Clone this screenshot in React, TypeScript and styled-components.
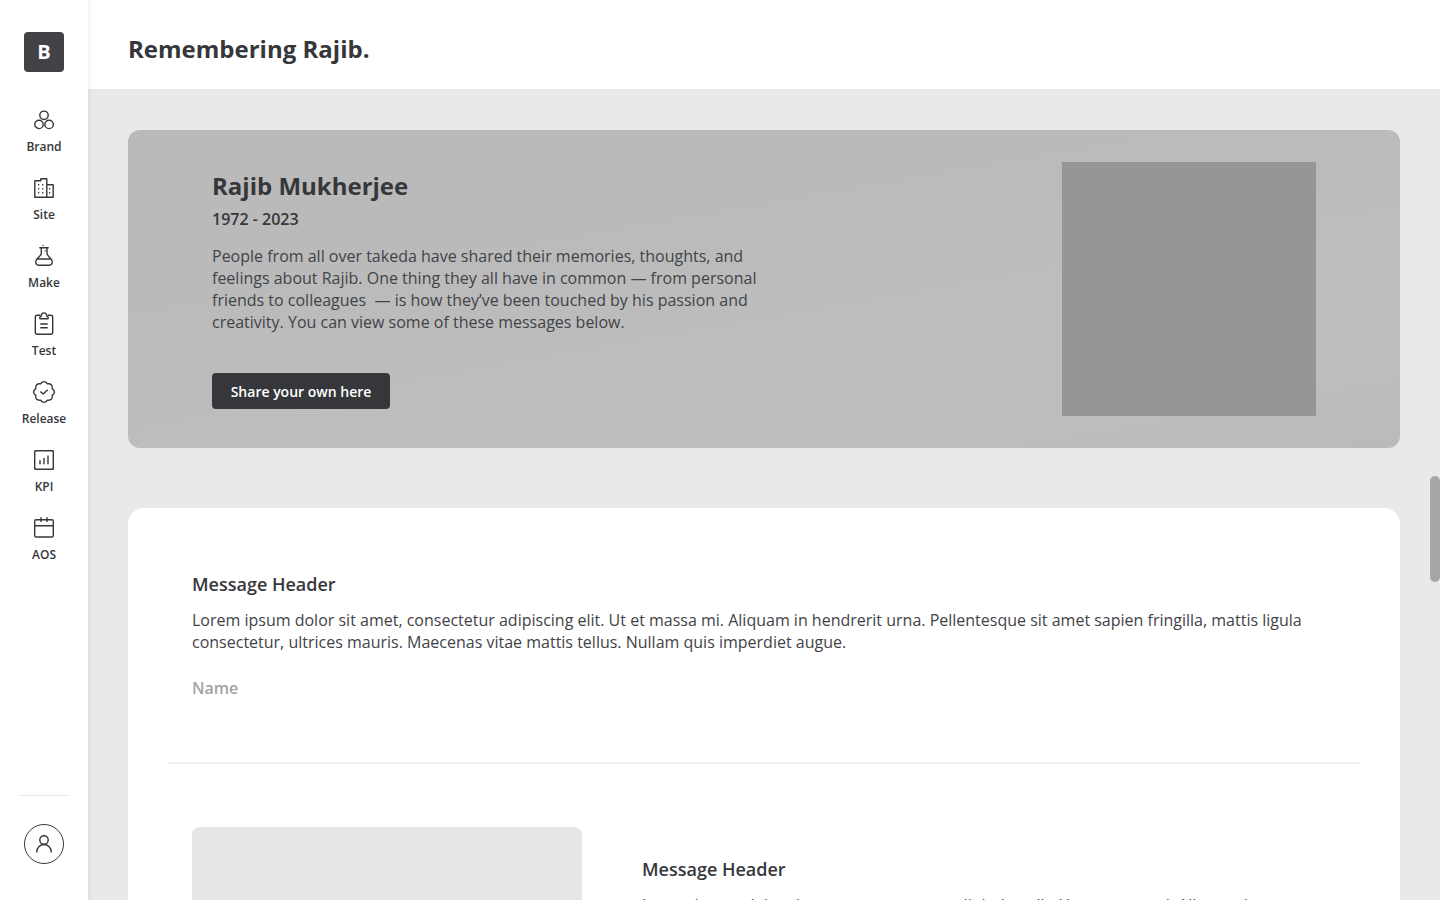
import React from "react";
import styled, { createGlobalStyle } from "styled-components";

const ink = "#36373a";
const copy = "#424347";

const GlobalStyle = createGlobalStyle`
  *, *::before, *::after { box-sizing: border-box; }
  body {
    margin: 0;
    background: #e9e9e9;
    color: ${ink};
    font-family: "Open Sans", "Noto Sans", sans-serif;
    font-size: 16px;
    line-height: 22px;
  }
  h1, h2, h3, p, ul { margin: 0; padding: 0; }
`;

const Shell = styled.div`
  display: flex;
  height: 100vh;
  overflow: hidden;
`;

const Sidebar = styled.aside`
  position: relative;
  z-index: 1;
  display: flex;
  flex-direction: column;
  align-items: center;
  flex: none;
  width: 88px;
  padding: 32px 0 36px;
  background: #fff;
  box-shadow: 0 0 6px rgba(0, 0, 0, 0.1);
`;

const Logo = styled.a`
  display: flex;
  align-items: center;
  justify-content: center;
  width: 40px;
  height: 40px;
  border-radius: 4px;
  background: #434347;
  color: #fff;
  font-size: 20px;
  font-weight: 700;
  text-decoration: none;
`;

const NavList = styled.ul`
  display: flex;
  flex-direction: column;
  gap: 20px;
  margin-top: 36px;
  list-style: none;
`;

const NavLink = styled.a`
  display: flex;
  flex-direction: column;
  align-items: center;
  gap: 6px;
  color: ${ink};
  font-size: 12px;
  font-weight: 600;
  line-height: 18px;
  text-decoration: none;
`;

const Icon = styled.svg`
  width: 24px;
  height: 24px;
  fill: none;
  stroke: currentColor;
  stroke-width: 1.4;
  stroke-linejoin: round;
`;

const Account = styled.div`
  display: flex;
  justify-content: center;
  width: 48px;
  margin-top: auto;
  padding-top: 28px;
  border-top: 1px solid #e6e6e6;
`;

const AccountButton = styled.button`
  display: flex;
  align-items: center;
  justify-content: center;
  width: 40px;
  height: 40px;
  padding: 0;
  border: 1px solid ${ink};
  border-radius: 50%;
  background: #fff;
  color: ${ink};
`;

const Page = styled.div`
  flex: 1;
  min-width: 0;
  height: 100vh;
  overflow: hidden;
`;

const Header = styled.header`
  display: flex;
  align-items: center;
  height: 90px;
  padding: 8px 40px 0;
  border-bottom: 1px solid #e9e9e9;
  background: #fff;
`;

const Title = styled.h1`
  font-size: 24px;
  font-weight: 700;
  line-height: 32px;
`;

const Main = styled.main`
  display: flex;
  flex-direction: column;
  gap: 60px;
  padding: 40px;
`;

const Hero = styled.section`
  display: flex;
  justify-content: space-between;
  gap: 40px;
  padding: 32px 84px;
  border-radius: 12px;
  background: linear-gradient(170deg, #bababa 30%, #bdbdbd 60%, #bdbdbd 85%, #bababa);
`;

const HeroText = styled.div`
  display: flex;
  flex-direction: column;
  align-items: flex-start;
  max-width: 576px;
  padding-top: 8px;
`;

const Person = styled.h2`
  font-size: 24px;
  font-weight: 700;
  line-height: 32px;
`;

const Years = styled.p`
  margin-top: 6px;
  font-weight: 600;
`;

const HeroCopy = styled.p`
  margin-top: 15px;
  color: ${copy};
  white-space: pre-wrap;
`;

const ShareButton = styled.button`
  min-width: 178px;
  height: 36px;
  margin-top: 40px;
  padding: 0 16px;
  border: 0;
  border-radius: 4px;
  background: ${ink};
  color: #fff;
  font-family: inherit;
  font-size: 14px;
  font-weight: 600;
`;

const Portrait = styled.div`
  flex: none;
  width: 254px;
  height: 254px;
  background: #969696;
`;

const Card = styled.section`
  padding: 0 40px;
  border-radius: 16px;
  background: #fff;
`;

const Message = styled.article`
  display: flex;
  gap: 60px;
  padding: 63px 24px;
  & + & { border-top: 2px solid #f2f2f2; }
`;

const Photo = styled.div`
  flex: none;
  width: 390px;
  height: 208px;
  border-radius: 8px;
  background: #e6e6e6;
`;

const MessageBody = styled.div`
  flex: 1;
  align-self: center;
  padding-right: 16px;
`;

const MessageTitle = styled.h3`
  font-size: 18px;
  font-weight: 600;
  line-height: 26px;
`;

const MessageText = styled.p`
  margin-top: 12px;
  color: ${copy};
`;

const Author = styled.p`
  margin-top: 24px;
  color: #a3a3a3;
  font-weight: 600;
`;

const ScrollThumb = styled.div`
  position: fixed;
  right: 0;
  top: 476px;
  z-index: 2;
  width: 10px;
  height: 106px;
  border-radius: 5px;
  background: #a6a6a6;
`;

const lorem =
  "Lorem ipsum dolor sit amet, consectetur adipiscing elit. Ut et massa mi. Aliquam in hendrerit urna. Pellentesque sit amet sapien fringilla, mattis ligula consectetur, ultrices mauris. Maecenas vitae mattis tellus. Nullam quis imperdiet augue.";

const navItems = [
  {
    label: "Brand",
    icon: (
      <>
        <circle cx="12" cy="7.3" r="4.2" />
        <circle cx="7" cy="16.4" r="4.2" />
        <circle cx="17.1" cy="16.4" r="4.2" />
      </>
    ),
  },
  {
    label: "Site",
    icon: (
      <>
        <path d="M2.8 21.2V4.8H8.8V2.8h6v18.4zM14.8 8.7h6.4v12.5h-6.4" />
        <path
          d="M6.7 8v1.4M10.7 8v1.4M6.7 12v1.4M10.7 12v1.4M6.7 16v1.4M10.7 16v1.4M17.6 12v1.4M17.6 16v1.4"
          strokeWidth="1.2"
        />
      </>
    ),
  },
  {
    label: "Make",
    icon: (
      <>
        <path d="M7.3 3.8h9.4M9.3 3.8v5.6c0 1.2-.5 1.7-1.5 2.7l-2.6 2.7c-2.6 2.8-1.4 6.5 1.8 6.5h10c3.2 0 4.4-3.7 1.8-6.5l-2.3-2.7c-1-1-1.5-1.5-1.5-2.7V3.8M4.8 15h14.6" />
        <path d="M11 .8v1.2M13.2 6.3v1.2" strokeWidth="1.2" />
      </>
    ),
  },
  {
    label: "Test",
    icon: (
      <>
        <path d="M8.2 3.2H5.2a2 2 0 0 0-1.9 2v15a2 2 0 0 0 1.9 2h13.6a2 2 0 0 0 1.9-2v-15a2 2 0 0 0-1.9-2h-3" />
        <path d="M8.3 6.8c-.8 0-.8-2.4.9-2.6 0-4.4 5.6-4.4 5.6 0 1.7.2 1.7 2.6.9 2.6zM8.3 12h7.4M8.3 15.8h7.4" />
      </>
    ),
  },
  {
    label: "Release",
    icon: (
      <>
        <path d="M8.6 3.8Q12 -.6 15.4 3.8Q20.9 3.1 20.2 8.6Q24.6 12 20.2 15.4Q20.9 20.9 15.4 20.2Q12 24.6 8.6 20.2Q3.1 20.9 3.8 15.4Q-.6 12 3.8 8.6Q3.1 3.1 8.6 3.8z" />
        <path d="M8.4 11.5l2.7 2.6 4.7-4.3" />
      </>
    ),
  },
  {
    label: "KPI",
    icon: (
      <>
        <rect x="2.7" y="2.7" width="18.6" height="18.6" rx=".6" />
        <path d="M8 12.3v4M12 10v6.3M16 7.4v8.9" />
      </>
    ),
  },
  {
    label: "AOS",
    icon: (
      <>
        <rect x="2.7" y="3.7" width="18.6" height="17.3" rx="1.6" />
        <path d="M2.7 9.7h18.6M9 1.3V6M15 1.3V6" />
      </>
    ),
  },
];

export default function App() {
  return (
    <>
      <GlobalStyle />
      <Shell>
        <Sidebar>
          <Logo href="#home">B</Logo>
          <nav aria-label="Sections">
            <NavList>
              {navItems.map((item) => (
                <li key={item.label}>
                  <NavLink href={`#${item.label.toLowerCase()}`}>
                    <Icon viewBox="0 0 24 24" aria-hidden="true">
                      {item.icon}
                    </Icon>
                    {item.label}
                  </NavLink>
                </li>
              ))}
            </NavList>
          </nav>
          <Account>
            <AccountButton type="button" aria-label="Account">
              <Icon viewBox="0 0 24 24" aria-hidden="true">
                <circle cx="12" cy="8" r="4.2" />
                <path d="M4.7 20.4v-.6a7.3 7.3 0 0 1 14.6 0v.6" />
              </Icon>
            </AccountButton>
          </Account>
        </Sidebar>
        <Page>
          <Header>
            <Title>Remembering Rajib.</Title>
          </Header>
          <Main>
            <Hero>
              <HeroText>
                <Person>Rajib Mukherjee</Person>
                <Years>1972 - 2023</Years>
                <HeroCopy>
                  {
                    "People from all over takeda have shared their memories, thoughts, and feelings about Rajib. One thing they all have in common — from personal friends to colleagues  — is how they’ve been touched by his passion and creativity. You can view some of these messages below."
                  }
                </HeroCopy>
                <ShareButton type="button">Share your own here</ShareButton>
              </HeroText>
              <Portrait />
            </Hero>
            <Card>
              <Message>
                <MessageBody>
                  <MessageTitle>Message Header</MessageTitle>
                  <MessageText>{lorem}</MessageText>
                  <Author>Name</Author>
                </MessageBody>
              </Message>
              <Message>
                <Photo />
                <MessageBody>
                  <MessageTitle>Message Header</MessageTitle>
                  <MessageText>{lorem}</MessageText>
                  <Author>Name</Author>
                </MessageBody>
              </Message>
            </Card>
          </Main>
        </Page>
      </Shell>
      <ScrollThumb />
    </>
  );
}
